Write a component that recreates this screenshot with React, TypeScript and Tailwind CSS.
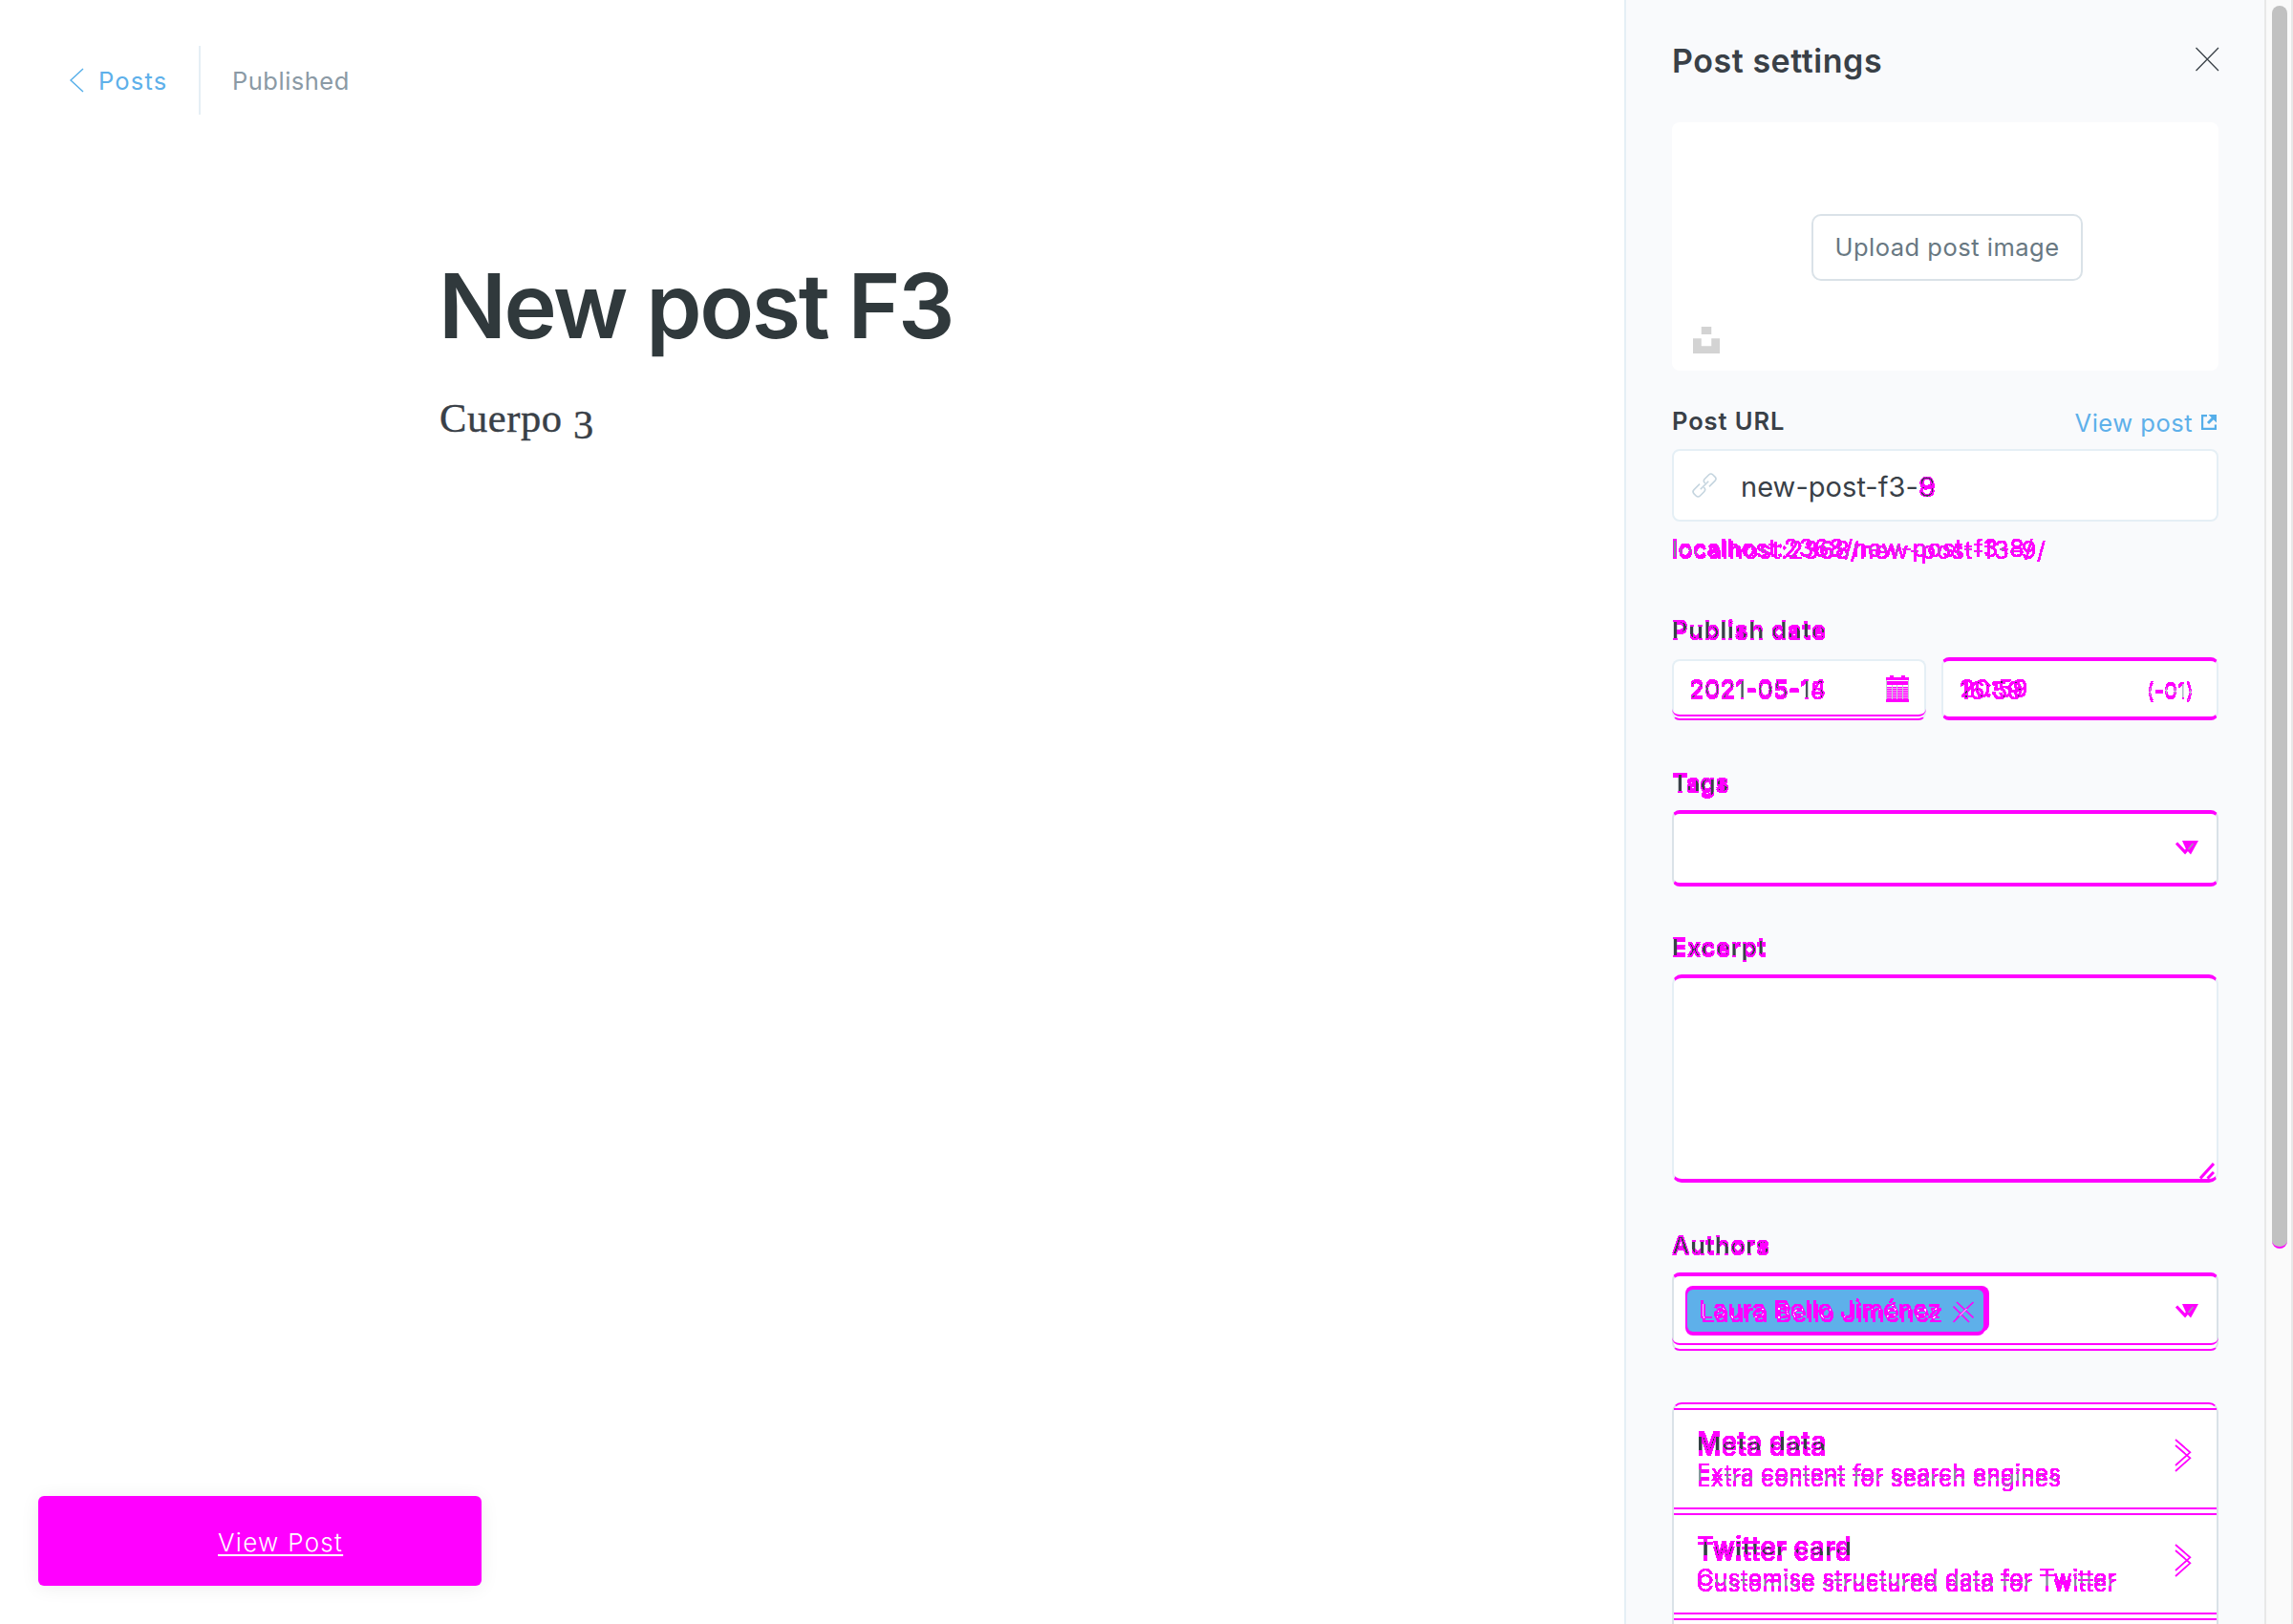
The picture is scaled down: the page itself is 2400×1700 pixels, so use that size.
import type { ReactNode } from "react";

/* Filters that colour every pixel where two renderings of a shape disagree. */
function DiffFilter({ id, dx, dy }: { id: string; dx: number; dy: number }) {
  return (
    <filter id={id} x="-10%" y="-30%" width="120%" height="170%" colorInterpolationFilters="sRGB">
      <feOffset in="SourceAlpha" dx={dx} dy={dy} result="moved" />
      <feComposite in="SourceAlpha" in2="moved" operator="arithmetic" k1={0} k2={1} k3={-1} k4={0} result="gone" />
      <feComposite in="moved" in2="SourceAlpha" operator="arithmetic" k1={0} k2={1} k3={-1} k4={0} result="added" />
      <feMerge result="both">
        <feMergeNode in="gone" />
        <feMergeNode in="added" />
      </feMerge>
      <feComponentTransfer in="both" result="mask">
        <feFuncA type="discrete" tableValues="0 1 1 1 1 1 1 1 1 1 1 1 1 1" />
      </feComponentTransfer>
      <feFlood floodColor="#ff00ff" result="pink" />
      <feComposite in="pink" in2="mask" operator="in" result="marks" />
      <feMerge>
        <feMergeNode in="SourceGraphic" />
        <feMergeNode in="marks" />
      </feMerge>
    </filter>
  );
}

function PairFilter({ id, color }: { id: string; color: string }) {
  return (
    <filter id={id} x="-10%" y="-30%" width="120%" height="170%" colorInterpolationFilters="sRGB">
      <feComponentTransfer in="SourceGraphic" result="union">
        <feFuncA type="discrete" tableValues="0 1 1 1 1 1 1 1 1 1 1 1 1 1" />
      </feComponentTransfer>
      <feFlood floodColor="#ff00ff" result="pink" />
      <feComposite in="pink" in2="union" operator="in" result="marks" />
      <feColorMatrix in="SourceGraphic" type="matrix" values="0 0 0 0 0  0 0 0 0 0  0 0 0 0 0  12 0 12 10 -33" result="common" />
      <feFlood floodColor={color} result="ink" />
      <feComposite in="ink" in2="common" operator="in" result="same" />
      <feMerge>
        <feMergeNode in="marks" />
        <feMergeNode in="same" />
      </feMerge>
    </filter>
  );
}

function Pair({ a, b, className, bClass = "" }: { a: string; b: string; className: string; bClass?: string }) {
  return (
    <span className={"grid justify-items-start whitespace-nowrap " + className}>
      <span className="col-start-1 row-start-1 text-[#ff0000]">{a}</span>
      <span className={"col-start-1 row-start-1 text-[#0000ff] mix-blend-screen " + bClass}>{b}</span>
    </span>
  );
}

function Label({ children, className }: { children: ReactNode; className: string }) {
  return (
    <div className={"h-8 text-[25.5px] leading-8 font-semibold text-[#394047] filter-[url(#shift-2)] " + className}>
      {children}
    </div>
  );
}

function Caret() {
  return (
    <svg width="24" height="18" viewBox="0 0 24 18" fill="none">
      <path d="M1 2.5 L10 12 L18 2.5" stroke="#ff00ff" strokeWidth="3.2" />
      <path d="M7 0 H24 L16 14.5 L11 9 Z" fill="#ff00ff" />
      <path d="M13.5 9 L18.5 3" stroke="#9aa5a8" strokeWidth="1.3" />
    </svg>
  );
}

function MetaRow({ title, text, titleClass, textClass }: { title: string; text: string; titleClass: string; textClass: string }) {
  return (
    <div className="relative flex h-[110px] justify-between border-b-2 border-[#ff00ff] pt-[22px] pr-[26px] pl-[24px]">
      <div className="absolute inset-x-0 top-1 h-[2px] bg-[#ff00ff]" />
      <div>
        <div className={"h-8 text-[27.5px] leading-8 font-semibold text-[#343f44] filter-[url(#shift-6)] " + titleClass}>{title}</div>
        <div className={"mt-[4px] h-7 text-[24px] leading-7 text-[#7f8f96] filter-[url(#shift-6)] " + textClass}>{text}</div>
      </div>
      <svg className="mt-[14px]" width="18" height="35" viewBox="0 0 18 35" fill="none" stroke="#ff00ff" strokeWidth="1.8">
        <path d="M1 1 L16.3 14.3 L1 28" />
        <path d="M1 7 L16.3 20.3 L1 34" />
      </svg>
    </div>
  );
}

const calendarLines = [12, 14, 16, 18, 20, 22, 24];

export default function App() {
  return (
    <div className="relative flex h-[1700px] w-[2400px] overflow-hidden bg-white font-['Inter',sans-serif]">
      <svg className="absolute" width="0" height="0">
        <defs>
          <DiffFilter id="shift-2" dx={0} dy={2} />
          <DiffFilter id="shift-6" dx={0} dy={6} />
          <DiffFilter id="shift-chip" dx={2} dy={4} />
          <PairFilter id="pair-dark" color="#394047" />
          <PairFilter id="pair-gray" color="#7f8f98" />
        </defs>
      </svg>

      <main className="w-[1700px]">
        <header className="mt-12 flex h-[72px] items-center pl-[72px]">
          <svg width="16" height="26" viewBox="0 0 16 26" fill="none" stroke="#55aee9" strokeWidth="1.4">
            <path d="M15 1 L2 13 L15 25" />
          </svg>
          <div className="w-[120px] pt-[2px] pl-[15px] text-[25.5px] leading-8 tracking-[1.2px] text-[#5eb0ea]">Posts</div>
          <div className="h-[72px] w-[2px] bg-[#e5eff5]" />
          <div className="pt-[2px] pl-[33px] text-[25.5px] leading-8 tracking-[0.5px] text-[#8b9aa5]">Published</div>
        </header>
        <h1 className="mt-[145px] pl-[459px] text-[93.5px] leading-[110px] font-semibold tracking-[-2.4px] text-[#30393c]">New post F3</h1>
        <p className="mt-[33px] pl-[460px] font-['Liberation_Serif',serif] text-[42.5px] leading-[60px] tracking-[0.6px] text-[#394047] [-webkit-text-stroke:0.4px_#394047]">
          Cuerpo <span className="relative top-[7px]">3</span>
        </p>
      </main>

      <aside className="w-[670px] shrink-0 border-l-2 border-[#e5eff5] bg-[#f9fafc] pt-11 pr-12 pl-12">
        <div className="flex h-10 items-start justify-between">
          <h2 className="text-[34px] leading-10 font-semibold tracking-[0.55px] text-[#394047]">Post settings</h2>
          <svg className="mt-[5px] -mr-px" width="26" height="26" viewBox="0 0 26 26" fill="none" stroke="#394047" strokeWidth="1.3">
            <path d="M1.5 1 L25 25 M25 1 L1.5 25" />
          </svg>
        </div>

        <div className="relative mt-11 h-[260px] rounded-lg bg-white pt-24 pl-[146px]">
          <button className="block h-[70px] w-[284px] rounded-[10px] border-2 border-[#dae2e8] text-[25.5px] font-normal tracking-[0.5px] whitespace-nowrap text-[#687882]">
            Upload post image
          </button>
          <svg className="mt-12 -ml-[124px]" width="28" height="28" viewBox="0 0 32 32" fill="#d3d3d3">
            <path d="M10 9V0h12v9H10zm12 5h10v18H0V14h10v9h12v-9z" />
          </svg>
        </div>

        <div className="mt-[37px] flex h-8 justify-between">
          <div className="text-[25.5px] leading-8 font-semibold tracking-[0.9px] text-[#394047]">Post URL</div>
          <div className="flex pt-[2px] text-[25.5px] leading-8 tracking-[0.5px] text-[#5eb0ea]">
            View post
            <svg className="mt-[7px] mr-[2px] ml-[9px]" width="16" height="16" viewBox="0 0 16 16" fill="none" stroke="#55aee9" strokeWidth="2.2">
              <path d="M6 1.1 H1.1 V14.9 H14.9 V10.5" />
              <path d="M7 9 L12.5 3.5" strokeWidth="3" />
              <path d="M7.5 0 H16 V8.500 Z" fill="#55aee9" stroke="none" />
            </svg>
          </div>
        </div>

        <div className="mt-[13px] flex h-[76px] items-center rounded-lg border-2 border-[#e5eff5] bg-white pl-[19px] text-[29px] leading-8 text-[#394047]">
          <svg className="shrink-0" width="26" height="26" viewBox="0 0 26 26" fill="none" stroke="#c5d5df" strokeWidth="1.6">
            <g transform="rotate(-45 13 13)">
              <path d="M10.5 8.5 H2 a3 3 0 0 0 -3 3 v3 a3 3 0 0 0 3 3 H8 a3 3 0 0 0 3 -3 v-.5" />
              <path d="M15.5 17.5 H24 a3 3 0 0 0 3 -3 v-3 a3 3 0 0 0 -3 -3 H18 a3 3 0 0 0 -3 3 v.5" />
              <path d="M7 13 H19" />
            </g>
          </svg>
          <span className="ml-[25px] pt-[3px] tracking-[0.05px]">new-post-f3-</span>
          <Pair className="pt-[3px] filter-[url(#pair-dark)]" a="8" b="9" />
        </div>

        <Pair
          className="mt-3 h-8 text-[25px] leading-8 tracking-[0.33px] filter-[url(#pair-gray)]"
          a="localhost:2368/new-post-f3-8/"
          b="localhost:2368/new-post-f3-9/"
          bClass="relative top-[2px] tracking-[0.79px]"
        />

        <Label className="mt-[53px] tracking-[0.85px]">Publish date</Label>
        <div className="mt-[13px] flex h-[66px] items-end justify-between">
          <div className="relative flex h-16 w-[266px] rounded-lg border-2 border-[#e5eff5] border-b-[#ff00ff] bg-white pt-[13px] pl-[16px] text-[26px] leading-8 tracking-[0.15px] text-[#4a555b]">
            <div className="absolute -inset-x-[2px] top-[40px] h-[18px] rounded-b-lg border-b-2 border-[#ff00ff]" />
            <span className="filter-[url(#shift-2)]">2021-05-1</span>
            <Pair className="h-8 filter-[url(#pair-dark)]" a="4" b="5" bClass="relative top-[2px]" />
            <svg className="absolute top-[15px] right-[16px]" width="24" height="28" viewBox="0 0 24 28">
              <g fill="#ff00ff">
                <path d="M4 0h4v5H4zM16 0h4v5h-4zM0 2h24v3H0zM1 6h22v4H1zM0 25h24v3H0z" />
                {calendarLines.map((y) => (
                  <rect key={y} x="1" y={y} width="22" height="1.4" />
                ))}
              </g>
              <g fill="#c3cfd2">
                <rect x="0" y="5" width="1" height="20" />
                <rect x="6" y="10" width="1" height="15" />
                <rect x="11" y="10" width="1" height="15" />
                <rect x="17" y="10" width="1" height="15" />
                <rect x="23" y="5" width="1" height="20" />
              </g>
            </svg>
          </div>
          <div className="flex h-[66px] w-[290px] justify-between rounded-lg border-x-2 border-y-4 border-[#e5eff5] border-y-[#ff00ff] bg-white pt-[13px] pr-[24px] pl-[17px] text-[26px] leading-8">
            <Pair className="h-8 filter-[url(#pair-dark)]" a="20:59" b="16:59" bClass="relative top-[2px]" />
            <span className="pt-px text-[22px] leading-8 font-light tracking-[0.3px] text-[#b0bec5] filter-[url(#shift-2)]">(-01)</span>
          </div>
        </div>

        <Label className="mt-[49px]">Tags</Label>
        <div className="mt-[13px] flex h-20 justify-end rounded-lg border-x-2 border-y-4 border-[#dae2e8] border-y-[#ff00ff] bg-white pt-7 pr-[19px]">
          <Caret />
        </div>

        <Label className="mt-[47px] tracking-[0.6px]">Excerpt</Label>
        <div className="mt-[13px] flex h-[218px] items-end justify-end rounded-[10px] border-x-2 border-y-4 border-[#e5eff5] border-y-[#ff00ff] bg-white pr-[2px]">
          <svg width="16" height="17" viewBox="0 0 16 17" fill="none" stroke="#ff00ff" strokeWidth="3">
            <path d="M1 16.5 L15 1 M8.5 16.5 L15 10" />
          </svg>
        </div>

        <Label className="mt-[49px] tracking-[0.6px]">Authors</Label>
        <div className="relative mt-[13px] flex h-[82px] justify-between rounded-lg border-x-2 border-t-4 border-b-2 border-[#dae2e8] border-y-[#ff00ff] bg-white pr-[19px] pl-3">
          <div className="absolute -inset-x-[2px] bottom-[4px] h-[18px] rounded-b-lg border-b-2 border-[#ff00ff]" />
          <div className="relative mt-[10px] h-12 w-[318px] rounded-lg bg-[#ff00ff]">
            <div className="absolute top-1 left-0 h-12 w-[314px] rounded-lg bg-[#ff00ff]" />
            <div className="absolute top-1 left-[2px] flex h-11 w-[310px] items-start rounded-md bg-[#5eb0ea] pt-[5px] pl-3">
              <span className="text-[26px] leading-8 tracking-[0.34px] whitespace-nowrap text-white filter-[url(#shift-chip)]">Laura Bello Jiménez</span>
              <svg className="absolute top-3 left-[278px]" width="22" height="23" viewBox="0 0 22 23" fill="none" strokeWidth="1.7">
                <path d="M4 1 L21.500 17.500 M21.500 1 L4 17.500 M0.500 5.500 L17 22 M17 5.500 L0.500 22" stroke="#ff00ff" />
                <path d="M7 15.500 L14.500 8" stroke="#ffffff" strokeWidth="1" />
              </svg>
            </div>
          </div>
          <div className="mt-[29px]">
            <Caret />
          </div>
        </div>

        <div className="mt-[54px] h-[300px] rounded-t-[10px] border-x-2 border-t-2 border-[#dae2e8] border-t-[#ff00ff] bg-white">
          <MetaRow title="Meta data" text="Extra content for search engines" titleClass="tracking-[0.3px]" textClass="tracking-[0.37px]" />
          <MetaRow title="Twitter card" text="Customise structured data for Twitter" titleClass="tracking-[0.3px]" textClass="tracking-[0.46px]" />
          <div className="mt-1 h-[2px] bg-[#ff00ff]" />
        </div>
      </aside>

      <div className="h-full w-[30px] shrink-0 border-x-2 border-[#e8e8e8] bg-[#fafafa] pt-[6px] pl-[6px]">
        <div className="h-[1301px] w-4 rounded-full border-b-2 border-[#ff00ff] bg-[#c1c1c1]" />
      </div>

      <div className="absolute top-[1566px] left-10 h-[94px] w-[464px] rounded-[6px] bg-[#ff00ff] pt-8 pl-[188px] shadow-[0_2px_20px_rgba(0,0,0,0.07)]">
        <a className="block text-[26px] leading-[34px] font-light tracking-[1.3px] text-white underline decoration-2 underline-offset-[3px] [text-decoration-skip-ink:none]">View Post</a>
      </div>
    </div>
  );
}
